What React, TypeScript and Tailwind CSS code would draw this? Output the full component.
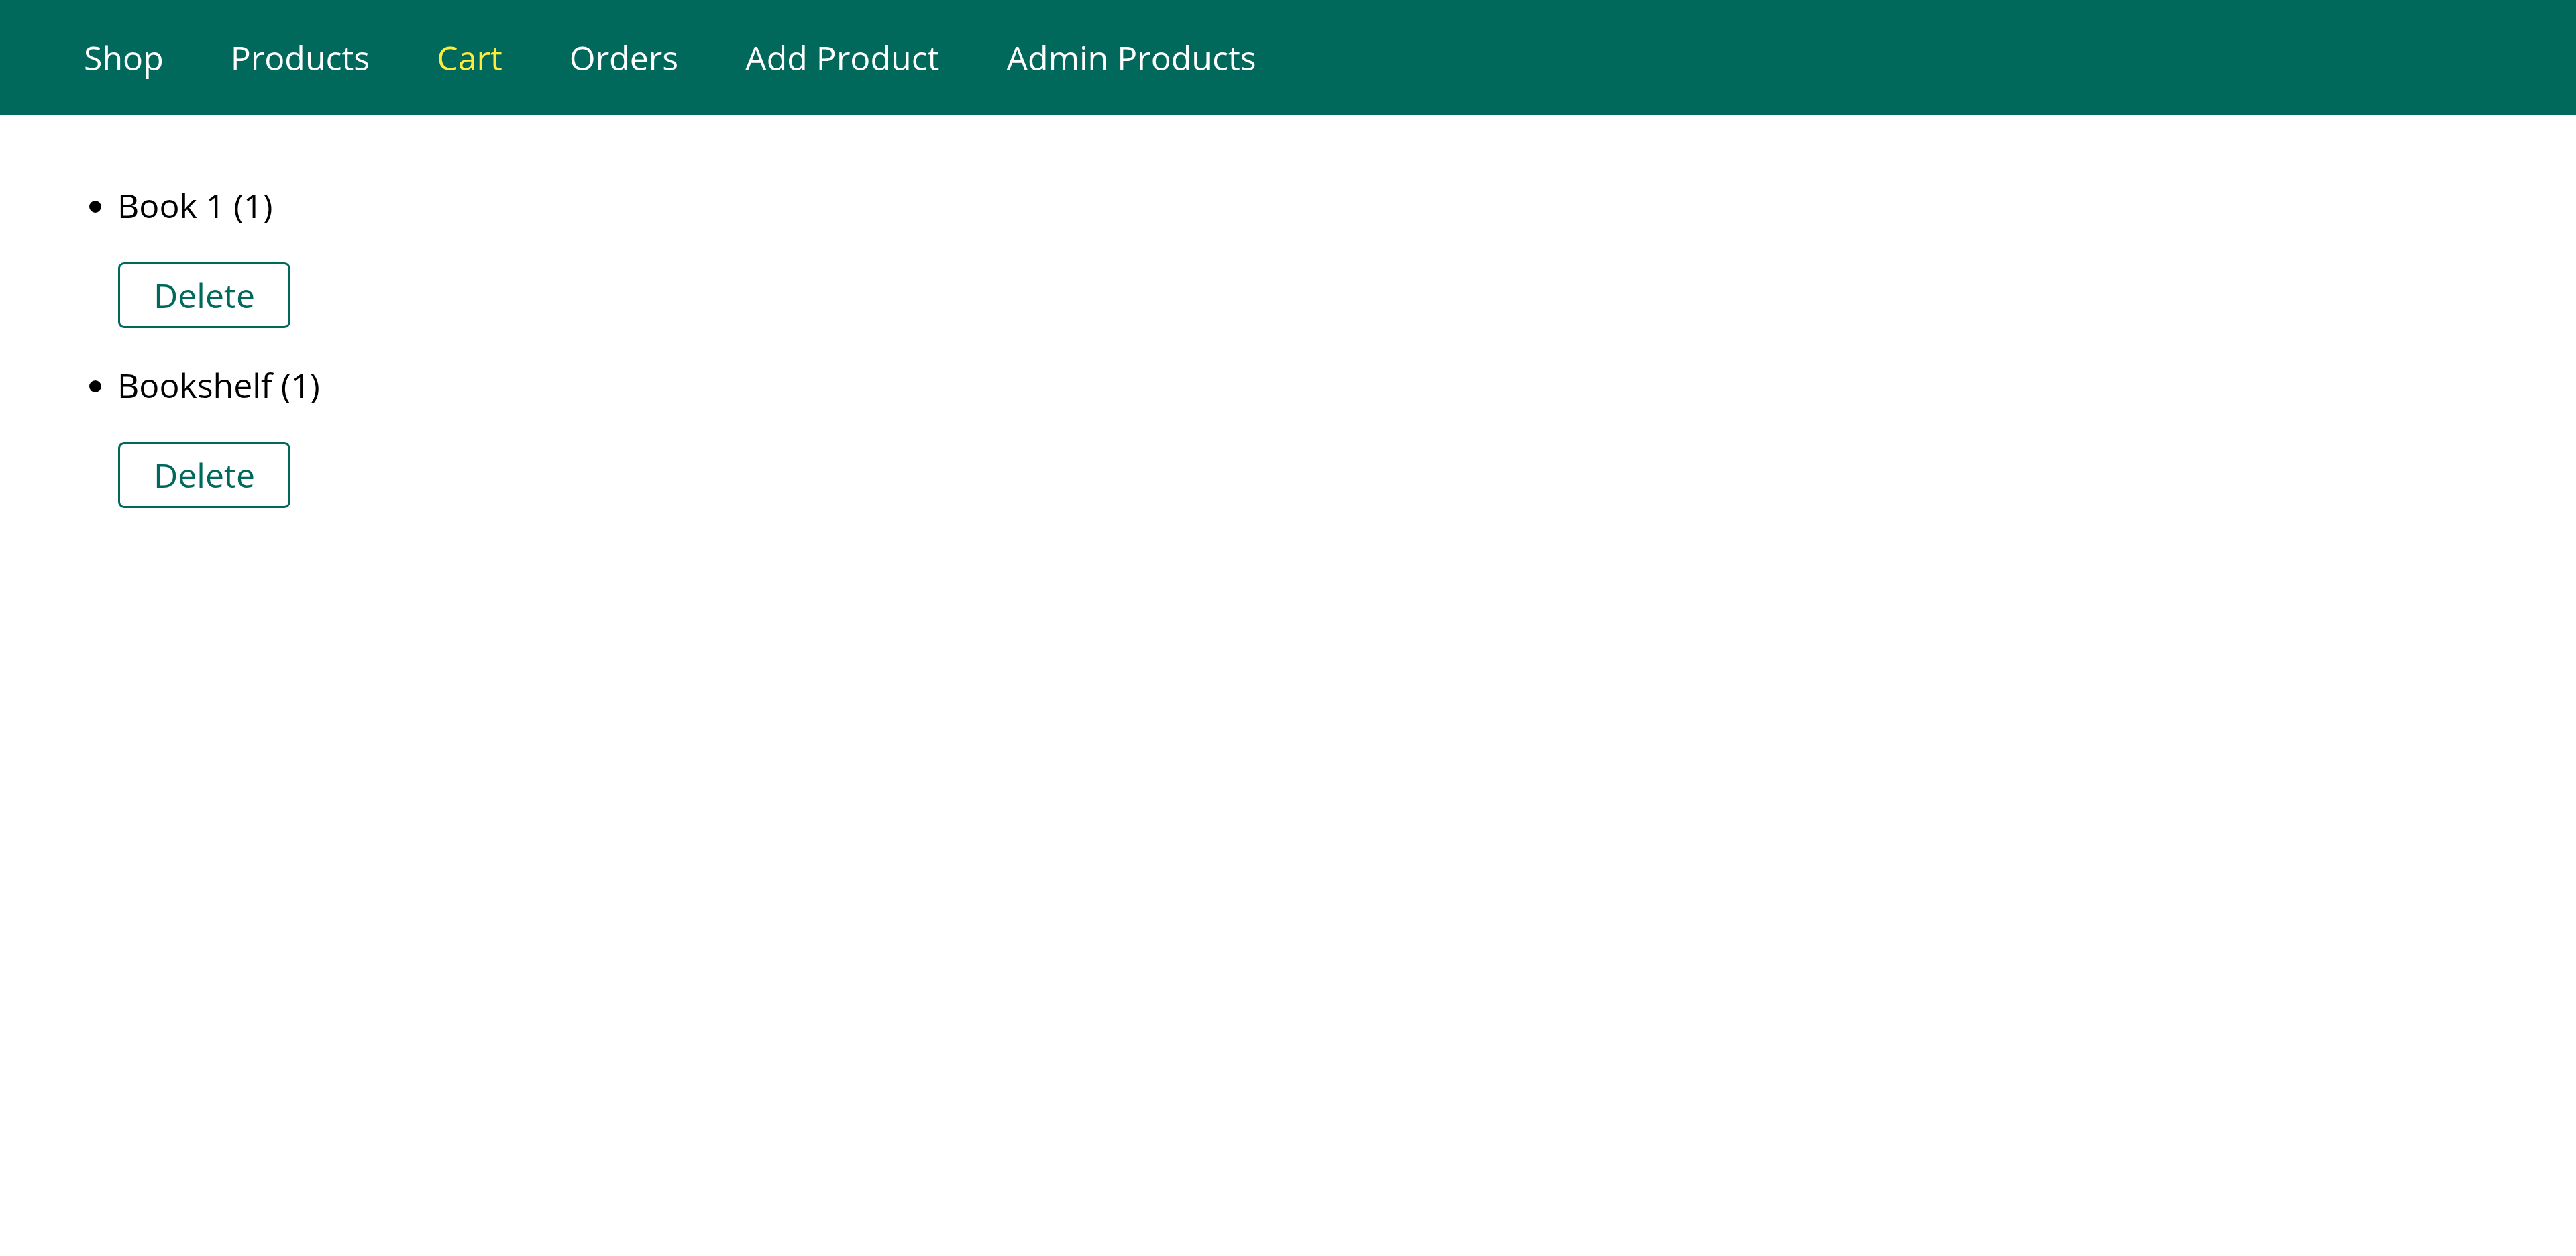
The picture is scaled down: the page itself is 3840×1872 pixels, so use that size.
const links = [
  { label: "Shop", active: false },
  { label: "Products", active: false },
  { label: "Cart", active: true },
  { label: "Orders", active: false },
  { label: "Add Product", active: false },
  { label: "Admin Products", active: false },
];

const cartItems = [
  { title: "Book 1", quantity: 1 },
  { title: "Bookshelf", quantity: 1 },
];

export default function App() {
  return (
    <div className="min-h-screen bg-white font-['Open_Sans',sans-serif] text-[50px] leading-[68px] text-black">
      <header className="flex h-[172px] w-full items-center bg-[#00695c] px-[125px]">
        <nav>
          <ul className="flex gap-[100px]">
            {links.map((link) => (
              <li key={link.label}>
                <a href="#" className={link.active ? "text-[#ffeb3b]" : "text-white"}>
                  {link.label}
                </a>
              </li>
            ))}
          </ul>
        </nav>
      </header>

      <main className="pl-[50px] pt-[100px]">
        <ul className="list-disc pl-[125px]">
          {cartItems.map((item) => (
            <li key={item.title} className="mb-[51px]">
              <p>
                {item.title} ({item.quantity})
              </p>
              <form className="mt-[51px]" onSubmit={(e) => e.preventDefault()}>
                <button
                  type="submit"
                  className="ml-[1px] cursor-pointer rounded-[9px] border-[3px] border-[#00695c] bg-white px-[50px] py-[12px] text-[#00695c]"
                >
                  Delete
                </button>
              </form>
            </li>
          ))}
        </ul>
      </main>
    </div>
  );
}
